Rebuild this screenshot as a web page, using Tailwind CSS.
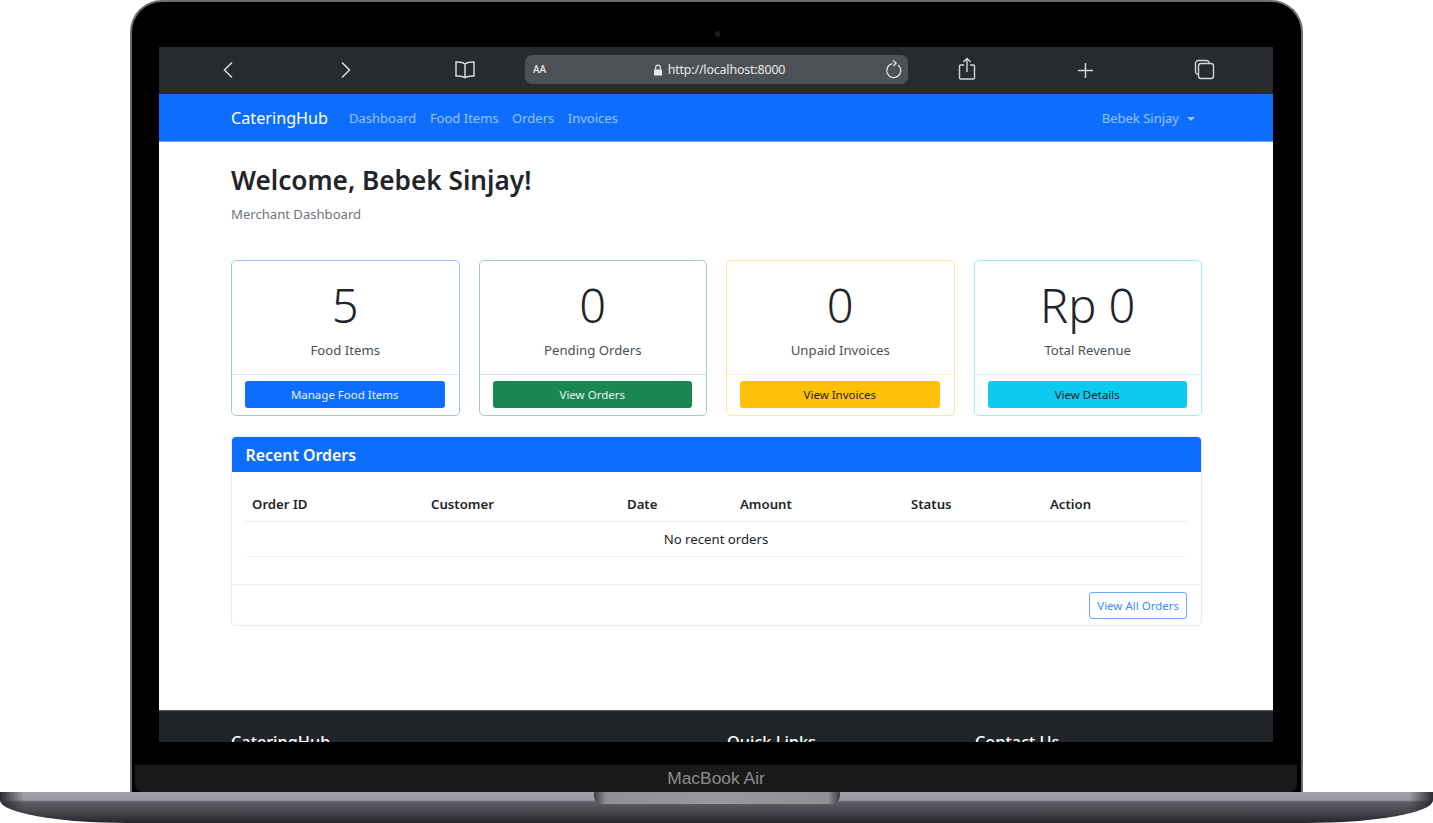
<!DOCTYPE html>
<html lang="en">
<head>
    <meta charset="UTF-8">
    <title>CateringHub</title>
    <script src="https://cdn.jsdelivr.net/npm/@tailwindcss/browser@4"></script>
</head>
<body class="bg-white w-[1433px] h-[823px] overflow-hidden font-['Noto_Sans',sans-serif]">
    <!-- Lid -->
    <div class="ml-[130px] w-[1173px] h-[792px] bg-black rounded-t-[32px] border-x-2 border-t-2 border-[#6b6c72] flex flex-col relative">
        <div class="absolute top-[29px] left-[583px] w-[5px] h-[6px] rounded-full bg-[#1c1c20]"></div>
        <div class="h-[45px] shrink-0"></div>

        <!-- Screen -->
        <div class="ml-[27px] w-[1114px] h-[695px] overflow-hidden flex flex-col shrink-0">
            <!-- Browser bar -->
            <div class="h-[47px] shrink-0 bg-[#272b2f] flex items-center relative text-[#d5d6d8]">
                <svg class="absolute left-[62px] top-[14px] w-[14px] h-[18px]" viewBox="0 0 14 18" fill="none" stroke="currentColor" stroke-width="1.6"><path d="M11 1.5 3.5 9l7.5 7.5"/></svg>
                <svg class="absolute left-[180px] top-[14px] w-[14px] h-[18px]" viewBox="0 0 14 18" fill="none" stroke="currentColor" stroke-width="1.6"><path d="M3 1.5 10.5 9 3 16.500"/></svg>
                <svg class="absolute left-[295px] top-[13px] w-[22px] h-[20px]" viewBox="0 0 22 20" fill="none" stroke="currentColor" stroke-width="1.5"><path d="M11 4C9 2.300 6 1.800 2 2v14c4-.2 7 .2 9 1.700 2-1.500 5-1.900 9-1.700V2c-4-.2-7 .3-9 2Zm0 0v13.700"/></svg>
                <div class="absolute left-[366px] top-[8px] w-[383px] h-[29px] rounded-[7px] bg-[#4d5055] flex items-center justify-center text-[12.500px] text-[#e8e8e9]">
                    <span class="absolute left-[8px] top-[7px] text-[10px] font-medium leading-[15px]">AA</span>
                    <svg class="ml-[5px] w-[10px] h-[12px] mr-[5px]" viewBox="0 0 10 12" fill="currentColor"><path d="M1 5.500h8v6H1z"/><path d="M2.700 5.500V3.500a2.300 2.300 0 0 1 4.600 0v2" fill="none" stroke="currentColor" stroke-width="1.200"/></svg>
                    <span class="tracking-[-0.2px] pt-[1px]">http://localhost:8000</span>
                    <svg class="absolute right-[5px] top-[5px] w-[18px] h-[20px]" viewBox="0 0 18 20" fill="none" stroke="currentColor" stroke-width="1.300"><path d="M7.500 3.700a7 7 0 1 0 5.500 1.300"/><path d="M8 .5 11 3 8.500 6"/></svg>
                </div>
                <svg class="absolute left-[799px] top-[10px] w-[18px] h-[24px]" viewBox="0 0 18 24" fill="none" stroke="currentColor" stroke-width="1.400"><path d="M6 8H2.500a1 1 0 0 0-1 1v12a1 1 0 0 0 1 1h13a1 1 0 0 0 1-1V9a1 1 0 0 0-1-1H12"/><path d="M9 15V1.500M5.500 5 9 1.500 12.500 5"/></svg>
                <svg class="absolute left-[918px] top-[15px] w-[17px] h-[17px]" viewBox="0 0 17 17" fill="none" stroke="currentColor" stroke-width="1.500"><path d="M8.500 1v15M1 8.500h15"/></svg>
                <svg class="absolute left-[1035px] top-[12px] w-[21px] h-[21px]" viewBox="0 0 21 21" fill="none" stroke="currentColor" stroke-width="1.400"><path d="M4.500 15.500A3 3 0 0 1 1.500 12.500V4.500A3 3 0 0 1 4.500 1.500h8A3 3 0 0 1 15.500 4.500"/><rect x="4.500" y="4.500" width="15" height="15" rx="2.500"/></svg>
            </div>

            <!-- Navbar -->
            <nav class="h-[48px] shrink-0 bg-[#0d6efd] border-b border-[#6ea8fe] pl-[72px] pr-[78px] pt-[2px] flex items-center text-[13px] text-white/55">
                <a class="text-[16.200px] text-white mr-[21px]">CateringHub</a>
                <div class="flex gap-[13.500px]">
                    <a>Dashboard</a>
                    <a>Food Items</a>
                    <a>Orders</a>
                    <a>Invoices</a>
                </div>
                <div class="ml-auto flex items-center gap-[8px]">
                    <a>Bebek Sinjay</a>
                    <span class="w-0 h-0 border-x-[4px] border-x-transparent border-t-[4px] border-t-white/60"></span>
                </div>
            </nav>

            <!-- Page -->
            <main class="flex-1 bg-white pl-[72px] pr-[71px] pt-[22px] text-[#212529]">
                <h1 class="text-[26.200px] font-semibold leading-[32px]">Welcome, Bebek Sinjay!</h1>
                <p class="mt-[8px] text-[13.100px] leading-[21px] text-[#6c757d]">Merchant Dashboard</p>

                <div class="mt-[35px] grid grid-cols-4 gap-[19px]">
                    <div class="h-[156px] rounded-[5px] border border-[#9ec5fe] flex flex-col">
                        <div class="flex-1 text-center pt-[12px]">
                            <div class="text-[47px] font-light leading-[64px]">5</div>
                            <div class="mt-[3px] text-[13.200px] leading-[21px] text-[#495057]">Food Items</div>
                        </div>
                        <div class="h-[41px] border-t border-[#d5e5fd] pl-[13px] pr-[14px] pt-[6px]">
                            <button class="w-full h-[27px] rounded-[3px] bg-[#0d6efd] text-white/90 text-[11.500px]">Manage Food Items</button>
                        </div>
                    </div>
                    <div class="h-[156px] rounded-[5px] border border-[#a3cfbb] flex flex-col">
                        <div class="flex-1 text-center pt-[12px]">
                            <div class="text-[47px] font-light leading-[64px]">0</div>
                            <div class="mt-[3px] text-[13.200px] leading-[21px] text-[#495057]">Pending Orders</div>
                        </div>
                        <div class="h-[41px] border-t border-[#d3e6de] pl-[13px] pr-[14px] pt-[6px]">
                            <button class="w-full h-[27px] rounded-[3px] bg-[#198754] text-white/90 text-[11.500px]">View Orders</button>
                        </div>
                    </div>
                    <div class="h-[156px] rounded-[5px] border border-[#ffe69c] flex flex-col">
                        <div class="flex-1 text-center pt-[12px]">
                            <div class="text-[47px] font-light leading-[64px]">0</div>
                            <div class="mt-[3px] text-[13.200px] leading-[21px] text-[#495057]">Unpaid Invoices</div>
                        </div>
                        <div class="h-[41px] border-t border-[#fff3cd] pl-[13px] pr-[14px] pt-[6px]">
                            <button class="w-full h-[27px] rounded-[3px] bg-[#ffc107] text-[#212529] text-[11.500px]">View Invoices</button>
                        </div>
                    </div>
                    <div class="h-[156px] rounded-[5px] border border-[#9eeaf9] flex flex-col">
                        <div class="flex-1 text-center pt-[12px]">
                            <div class="text-[47px] font-light leading-[64px]">Rp 0</div>
                            <div class="mt-[3px] text-[13.200px] leading-[21px] text-[#495057]">Total Revenue</div>
                        </div>
                        <div class="h-[41px] border-t border-[#cff4fc] pl-[13px] pr-[14px] pt-[6px]">
                            <button class="w-full h-[27px] rounded-[3px] bg-[#0dcaf0] text-[#212529] text-[11.500px]">View Details</button>
                        </div>
                    </div>
                </div>

                <!-- Recent orders -->
                <div class="mt-[20px] h-[190px] rounded-[5px] border border-[#e9eaec] flex flex-col overflow-hidden">
                    <div class="h-[35px] shrink-0 bg-[#0d6efd] text-white text-[15.900px] font-semibold leading-[37px] px-[13.500px]">Recent Orders</div>
                    <div class="flex-1 pl-[13px] pr-[14px] pt-[15px]">
                        <table class="w-[942px] table-fixed text-[13.200px]">
                            <colgroup>
                                <col class="w-[179px]"><col class="w-[196px]"><col class="w-[113px]"><col class="w-[171px]"><col class="w-[139px]"><col class="w-[144px]">
                            </colgroup>
                            <thead>
                                <tr class="h-[34px] border-b border-[#e9ecef] text-left">
                                    <th class="px-[7px] pt-[2px] font-semibold">Order ID</th>
                                    <th class="px-[7px] pt-[2px] font-semibold">Customer</th>
                                    <th class="px-[7px] pt-[2px] font-semibold">Date</th>
                                    <th class="px-[7px] pt-[2px] font-semibold">Amount</th>
                                    <th class="px-[7px] pt-[2px] font-semibold">Status</th>
                                    <th class="px-[7px] pt-[2px] font-semibold">Action</th>
                                </tr>
                            </thead>
                            <tbody>
                                <tr class="h-[35px] border-b border-[#f0f1f2]">
                                    <td colspan="6" class="pt-[2px] text-center">No recent orders</td>
                                </tr>
                            </tbody>
                        </table>
                    </div>
                    <div class="h-[41px] shrink-0 border-t border-[#ededee] flex items-center justify-end pr-[14px]">
                        <button class="h-[27px] px-[7px] pt-[1px] rounded-[3px] border border-[#6ea8fe] text-[#3d8bfd] text-[11.500px]">View All Orders</button>
                    </div>
                </div>
            </main>

            <!-- Footer, cut off by the bezel -->
            <footer class="h-[32px] shrink-0 overflow-hidden bg-[#212529] border-t border-[#55585c] text-white text-[16.300px] font-medium leading-[20px] pt-[21px] pl-[72px] grid grid-cols-[496px_248px_1fr]">
                <span>CateringHub</span>
                <span>Quick Links</span>
                <span>Contact Us</span>
            </footer>
        </div>

        <!-- Chin -->
        <div class="mt-[23px] ml-[3px] mr-[4px] flex-1 bg-[#1a1a1a] rounded-b-[8px] text-center text-[#8d8d8f] text-[17.400px] leading-[27px] font-['Liberation_Sans',sans-serif]">MacBook Air</div>
    </div>

    <!-- Base -->
    <div class="relative h-[31px] rounded-b-[127px_23px] bg-[linear-gradient(to_bottom,#a1a1a9_0,#9a9aa2_8px,#5c5d65_10px,#46474e_20px,#24252b_31px)] overflow-hidden">
        <div class="absolute inset-y-0 left-0 w-[24px] bg-gradient-to-r from-[#2b2c31] to-transparent"></div>
        <div class="absolute inset-y-0 right-0 w-[24px] bg-gradient-to-l from-[#2b2c31] to-transparent"></div>
        <div class="absolute top-0 left-[594px] w-[246px] h-[12px] rounded-b-[8px] bg-[linear-gradient(to_right,#3d3e44,#8f8f96_12px,#98989f_50%,#8f8f96_234px,#3d3e44)]"></div>
    </div>
</body>
</html>
